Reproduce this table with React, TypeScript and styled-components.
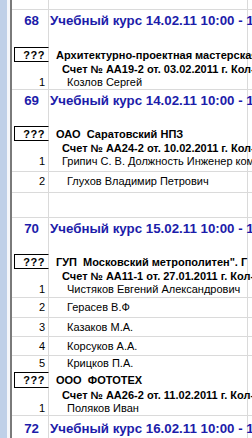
import styled, { createGlobalStyle } from "styled-components";

const GlobalStyle = createGlobalStyle`
    html, body {
        margin: 0;
        padding: 0;
        background: #ffffff;
        overflow: hidden;
    }
    body {
        font-family: "Liberation Sans", Arial, sans-serif;
    }
`;

const Window = styled.div`
    display: flex;
    width: 252px;
    height: 438px;
    overflow: hidden;
`;

const SideStrip = styled.div`
    width: 7px;
    flex-shrink: 0;
    background: #bfd0e8;
    border-right: 3px solid #f4f6fa;
`;

const Frame = styled.div`
    width: 2px;
    flex-shrink: 0;
    background: #7a7a7a;
`;

const Sheet = styled.div`
    display: flex;
    flex-direction: column;
    flex: 1;
    min-width: 0;
`;

const Row = styled.div<{ $h: number; $line?: boolean }>`
    display: grid;
    grid-template-columns: 37px 199px 1fr;
    height: ${(p) => p.$h}px;
    flex-shrink: 0;
    border-bottom: ${(p) => (p.$line ? "1px solid #dadada" : "none")};
    box-sizing: border-box;
`;

const NumCell = styled.div<{ $box?: boolean; $big?: boolean; $pb?: number }>`
    display: flex;
    align-items: center;
    justify-content: flex-end;
    padding-right: ${(p) => (p.$big ? 9 : 3)}px;
    padding-bottom: ${(p) => p.$pb ?? 0}px;
    border-right: 1px solid #dadada;
    border-top: ${(p) => (p.$box ? "1px solid #000" : "none")};
    border-left: ${(p) => (p.$box ? "1px solid #000" : "none")};
    border-bottom: ${(p) => (p.$box ? "1px solid #000" : "none")};
    margin-left: ${(p) => (p.$box ? 2 : 0)}px;
    box-sizing: border-box;
    font-size: ${(p) => (p.$big ? 13.3 : 11)}px;
    font-weight: ${(p) => (p.$big ? 700 : 400)};
    color: ${(p) => (p.$big ? "#1c1caa" : "#000")};
    white-space: nowrap;
`;

const Qmark = styled.span`
    font-weight: 700;
    letter-spacing: 0.5px;
`;

const TextCell = styled.div<{ $indent: number; $kind: "head" | "org" | "bill" | "person"; $pb?: number }>`
    display: flex;
    align-items: center;
    padding-left: ${(p) => p.$indent}px;
    padding-bottom: ${(p) => p.$pb ?? 0}px;
    white-space: pre;
    overflow: visible;
    position: relative;
    z-index: 1;
    font-size: ${(p) => (p.$kind === "head" ? 13.3 : 11)}px;
    font-weight: ${(p) => (p.$kind === "person" ? 400 : 700)};
    color: ${(p) => (p.$kind === "head" ? "#1c1caa" : "#000")};
    border-right: 1px solid #dadada;
`;

const Rest = styled.div``;

type Line =
    | { t: "gap"; h: number; line?: boolean }
    | { t: "head"; h: number; n: string; text: string; line?: boolean }
    | { t: "org"; h: number; text: string; line?: boolean }
    | { t: "bill"; h: number; text: string; line?: boolean }
    | { t: "person"; h: number; n: string; text: string; indent?: number; pb?: number; line?: boolean };

const rows: Line[] = [
    { t: "gap", h: 10, line: true },
    { t: "head", h: 20, n: "68", text: "Учебный курс 14.02.11 10:00 - 17:00" },
    { t: "gap", h: 17 },
    { t: "org", h: 15, text: "Архитектурно-проектная мастерская" },
    { t: "bill", h: 14, text: "Счет № АА19-2 от. 03.02.2011 г. Кол-во" },
    { t: "person", h: 14, n: "1", text: "Козлов Сергей", pb: 1, line: true },
    { t: "head", h: 20, n: "69", text: "Учебный курс 14.02.11 10:00 - 17:00", },
    { t: "gap", h: 16 },
    { t: "org", h: 15, text: "ОАО  Саратовский НПЗ" },
    { t: "bill", h: 14, text: "Счет № АА24-2 от. 10.02.2011 г. Кол-во" },
    { t: "person", h: 17, n: "1", text: "Грипич С. В. Должность Инженер ком", indent: 13, pb: 4, line: true },
    { t: "person", h: 21, n: "2", text: "Глухов Владимир Петрович", pb: 2, line: true },
    { t: "gap", h: 25, line: true },
    { t: "head", h: 20, n: "70", text: "Учебный курс 15.02.11 10:00 - 17:00" },
    { t: "gap", h: 16 },
    { t: "org", h: 15, text: "ГУП  Московский метрополитен\". Г" },
    { t: "bill", h: 14, text: "Счет № АА11-1 от. 27.01.2011 г. Кол-во" },
    { t: "person", h: 15, n: "1", text: "Чистяков Евгений Александрович", pb: 3, line: true },
    { t: "person", h: 20, n: "2", text: "Герасев В.Ф", pb: 1, line: true },
    { t: "person", h: 19, n: "3", text: "Казаков М.А.", pb: 1, line: true },
    { t: "person", h: 19, n: "4", text: "Корсуков А.А.", pb: 1, line: true },
    { t: "person", h: 16, n: "5", text: "Крицков П.А.", pb: 2 },
    { t: "org", h: 16, text: "ООО  ФОТОТЕХ" },
    { t: "bill", h: 14, text: "Счет № АА26-2 от. 11.02.2011 г. Кол-во" },
    { t: "person", h: 14, n: "1", text: "Поляков Иван", pb: 1, line: true },
    { t: "head", h: 24, n: "72", text: "Учебный курс 16.02.11 10:00 - 17:00" },
];

const SheetRow = ({ r }: { r: Line }) => {
    if (r.t === "gap") {
        return (
            <Row $h={r.h} $line={r.line}>
                <NumCell />
                <TextCell $indent={0} $kind="person" />
                <Rest />
            </Row>
        );
    }
    if (r.t === "head") {
        return (
            <Row $h={r.h} $line={r.line}>
                <NumCell $big>{r.n}</NumCell>
                <TextCell $indent={1} $kind="head">{r.text}</TextCell>
                <Rest />
            </Row>
        );
    }
    if (r.t === "org") {
        return (
            <Row $h={r.h} $line={r.line}>
                <NumCell $box>
                    <Qmark>???</Qmark>
                </NumCell>
                <TextCell $indent={7} $kind="org">{r.text}</TextCell>
                <Rest />
            </Row>
        );
    }
    if (r.t === "bill") {
        return (
            <Row $h={r.h} $line={r.line}>
                <NumCell />
                <TextCell $indent={13} $kind="bill">{r.text}</TextCell>
                <Rest />
            </Row>
        );
    }
    return (
        <Row $h={r.h} $line={r.line}>
            <NumCell $pb={r.pb}>{r.n}</NumCell>
            <TextCell $indent={r.indent ?? 18} $kind="person" $pb={r.pb}>
                {r.text}
            </TextCell>
            <Rest />
        </Row>
    );
};

const App = () => {
    return (
        <>
            <GlobalStyle />
            <Window>
                <SideStrip />
                <Frame />
                <Sheet>
                    {rows.map((r, i) => (
                        <SheetRow key={i} r={r} />
                    ))}
                </Sheet>
            </Window>
        </>
    );
};

export default App;
